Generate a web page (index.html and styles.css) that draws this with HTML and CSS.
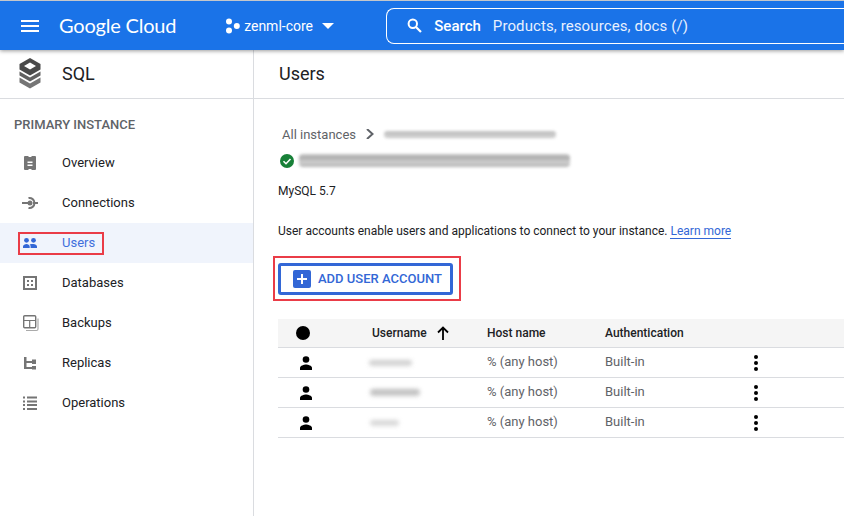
FILE: index.html
```html
<!DOCTYPE html>
<html lang="en">
<head>
  <meta charset="UTF-8">
  <meta name="viewport" content="width=device-width, initial-scale=1.0">
  <title>Users - SQL - Google Cloud</title>
  <link rel="stylesheet" href="styles.css">
</head>
<body>
  <header class="topbar">
    <svg class="menu-icon" width="18" height="12" viewBox="0 0 18 12"><path d="M0 0h18v2H0zM0 5h18v2H0zM0 10h18v2H0z" fill="#fff"/></svg>
    <span class="logo">Google Cloud</span>
    <div class="project">
      <svg width="16" height="16" viewBox="0 0 16 16" fill="#fff"><circle cx="4" cy="3.600" r="3"/><circle cx="4" cy="12.400" r="3"/><circle cx="11.800" cy="8" r="3"/></svg>
      <span>zenml-core</span>
      <svg class="caret" width="12" height="6" viewBox="0 0 12 6"><path d="M0 0h12L6 6z" fill="#fff"/></svg>
    </div>
    <div class="search">
      <svg width="15" height="15" viewBox="0 0 15 15"><circle cx="5.800" cy="5.800" r="4.200" fill="none" stroke="#fff" stroke-width="2"/><path d="M9 9l5 5" stroke="#fff" stroke-width="2.200"/></svg>
      <span class="search-label">Search</span>
      <span class="search-hint">Products, resources, docs (/)</span>
    </div>
  </header>

  <div class="layout">
    <aside class="sidebar">
      <div class="product">
        <svg width="24" height="31" viewBox="0 0 24 31">
          <path d="M12 0l10.500 6v5.500L12 17.500 1.500 11.500V6z" fill="#4a4a4a"/>
          <path d="M12 4.500L18 8l-6 3.500L6 8z" fill="#fff"/>
          <path d="M1.500 13.500l10.500 6 10.500-6v4L12 23.500l-10.500-6z" fill="#616161"/>
          <path d="M1.500 19.500l10.500 6 10.500-6v5L12 30.500l-10.500-6z" fill="#757575"/>
        </svg>
        <span>SQL</span>
      </div>
      <div class="nav-title">PRIMARY INSTANCE</div>
      <nav>
        <a class="nav-item">
          <svg width="20" height="20" viewBox="0 0 20 20"><path d="M5 3h3.500v1h3V3H15a1 1 0 0 1 1 1v12a1 1 0 0 1-1 1h-3.500v-1h-3v1H5a1 1 0 0 1-1-1V4a1 1 0 0 1 1-1z" fill="#757575"/><path d="M7.500 8.500h5V10h-5zM7.500 11.500h5V13h-5z" fill="#fff"/></svg>
          Overview
        </a>
        <a class="nav-item">
          <svg width="20" height="20" viewBox="0 0 20 20" fill="none" stroke="#757575"><path d="M2 10h6M13 10h5" stroke-width="2"/><path d="M8.500 5.100a5 5 0 1 1 0 9.800" stroke-width="2"/><circle cx="10" cy="10" r="2.500" fill="#757575" stroke="none"/></svg>
          Connections
        </a>
        <a class="nav-item active">
          <svg width="20" height="20" viewBox="0 0 20 20" fill="#3367d6"><circle cx="6.500" cy="7.300" r="2.400"/><circle cx="13.500" cy="7.300" r="2.400"/><path d="M3 15v-1.500c0-1.400 2-2.500 3.500-2.500s3.200 1.100 3.200 2.500V15zM10.600 15v-1.500c0-1-.4-1.800-1-2.300.9-.1 2.900-.2 3.900-.2 1.500 0 3.500 1.100 3.500 2.500V15z"/></svg>
          Users
          <span class="mark mark-users"></span>
        </a>
        <a class="nav-item">
          <svg width="20" height="20" viewBox="0 0 20 20"><path d="M4 4h12v12H4z" fill="none" stroke="#757575" stroke-width="2"/><path d="M7 7h2v2H7zM11 7h2v2h-2zM7 11h2v2H7zM11 11h2v2h-2z" fill="#757575"/></svg>
          Databases
        </a>
        <a class="nav-item">
          <svg width="20" height="20" viewBox="0 0 20 20" fill="none" stroke="#757575"><rect x="3.700" y="2.700" width="12" height="12" rx="1" stroke-width="1.400"/><path d="M4 7.500h11.500M9.700 7.500v7" stroke-width="1.200"/><path d="M18 5.500v10.500a1.500 1.500 0 0 1-1.500 1.500H6" stroke="#aaa" stroke-width="1.200"/></svg>
          Backups
        </a>
        <a class="nav-item">
          <svg width="20" height="20" viewBox="0 0 20 20" fill="#757575"><path d="M4 4h2.500v12H4zM6 8h7v2H6zM6 14h7v2H6z"/><path d="M12 6.500h4v4.500h-4zM12 13h4v3.500h-4z"/></svg>
          Replicas
        </a>
        <a class="nav-item">
          <svg width="20" height="20" viewBox="0 0 20 20" fill="#757575"><path d="M3 3.500h2v2H3zM3 7.500h2v2H3zM3 11h2v2H3zM3 15h2v2H3zM7 3.500h10v2H7zM7 7.500h10v2H7zM7 11h10v2H7zM7 15h10v2H7z"/></svg>
          Operations
        </a>
      </nav>
    </aside>

    <main class="content">
      <div class="page-title">Users</div>
      <div class="body">
        <div class="crumbs">
          <span>All instances</span>
          <svg width="8" height="10" viewBox="0 0 8 10"><path d="M1 0l5.500 5L1 10" fill="none" stroke="#5f6368" stroke-width="2"/></svg>
          <span class="smudge smudge-crumb"></span>
        </div>
        <div class="instance">
          <svg width="14" height="14" viewBox="0 0 14 14"><circle cx="7" cy="7" r="7" fill="#188038"/><path d="M3.500 7.200l2.500 2.500 4.500-4.700" fill="none" stroke="#fff" stroke-width="1.600"/></svg>
          <span class="smudge smudge-name"></span>
        </div>
        <div class="version">MySQL 5.7</div>
        <p class="intro">User accounts enable users and applications to connect to your instance. <a class="learn">Learn more</a></p>

        <div class="add-wrap">
          <button class="add-btn">
            <svg width="18" height="18" viewBox="0 0 18 18"><rect width="18" height="18" rx="2" fill="#3367d6"/><path d="M8 4h2v4h4v2h-4v4H8v-4H4V8h4z" fill="#fff"/></svg>
            <span class="add-label">ADD USER ACCOUNT</span>
          </button>
        </div>

        <div class="users-table">
          <div class="row head">
            <span class="cell-icon"><span class="dot"></span></span>
            <span class="cell-name">Username
              <svg width="12" height="14" viewBox="0 0 12 14"><path d="M6 14V2M1 6.500L6 1.500l5 5" fill="none" stroke="#000" stroke-width="1.800"/></svg>
            </span>
            <span class="cell-host">Host name</span>
            <span class="cell-auth">Authentication</span>
          </div>
          <div class="row">
            <span class="cell-icon"><svg width="14" height="14" viewBox="0 0 14 14"><circle cx="7" cy="3.500" r="3.300"/><path d="M1 14v-2c0-2.200 4-3.400 6-3.400s6 1.200 6 3.400v2z"/></svg></span>
            <span class="cell-name"><span class="smudge smudge-user1"></span></span>
            <span class="cell-host">% (any host)</span>
            <span class="cell-auth">Built-in</span>
            <span class="cell-more"><svg width="4" height="16" viewBox="0 0 4 16"><circle cx="2" cy="2" r="2"/><circle cx="2" cy="8" r="2"/><circle cx="2" cy="14" r="2"/></svg></span>
          </div>
          <div class="row">
            <span class="cell-icon"><svg width="14" height="14" viewBox="0 0 14 14"><circle cx="7" cy="3.500" r="3.300"/><path d="M1 14v-2c0-2.200 4-3.400 6-3.400s6 1.200 6 3.400v2z"/></svg></span>
            <span class="cell-name"><span class="smudge smudge-user2"></span></span>
            <span class="cell-host">% (any host)</span>
            <span class="cell-auth">Built-in</span>
            <span class="cell-more"><svg width="4" height="16" viewBox="0 0 4 16"><circle cx="2" cy="2" r="2"/><circle cx="2" cy="8" r="2"/><circle cx="2" cy="14" r="2"/></svg></span>
          </div>
          <div class="row">
            <span class="cell-icon"><svg width="14" height="14" viewBox="0 0 14 14"><circle cx="7" cy="3.500" r="3.300"/><path d="M1 14v-2c0-2.200 4-3.400 6-3.400s6 1.200 6 3.400v2z"/></svg></span>
            <span class="cell-name"><span class="smudge smudge-user3"></span></span>
            <span class="cell-host">% (any host)</span>
            <span class="cell-auth">Built-in</span>
            <span class="cell-more"><svg width="4" height="16" viewBox="0 0 4 16"><circle cx="2" cy="2" r="2"/><circle cx="2" cy="8" r="2"/><circle cx="2" cy="14" r="2"/></svg></span>
          </div>
        </div>
      </div>
    </main>
  </div>
</body>
</html>
```

FILE: styles.css
```css
* {
  box-sizing: border-box;
}
body {
  margin: 0;
  height: 516px;
  overflow: hidden;
  font-family: Roboto, Arial, sans-serif;
  font-size: 13px;
  color: #202124;
  background-color: #fff;
  border-top: 1px solid #c4c7cb;
}
svg {
  flex: none;
  display: block;
}

/* top bar */
.topbar {
  position: relative;
  z-index: 2;
  display: flex;
  align-items: center;
  height: 49px;
  padding-left: 21px;
  background-color: #1a73e8;
  color: #fff;
  box-shadow: 0 1px 4px rgba(0, 0, 0, 0.4);
}
.logo {
  margin-left: 20px;
  width: 167px;
  padding-bottom: 2px;
  font-family: Lato, Arial, sans-serif;
  font-size: 20px;
  letter-spacing: -0.2px;
}
.project {
  display: flex;
  align-items: center;
  gap: 3px;
  width: 162px;
  font-size: 14px;
}
.project .caret {
  margin-left: 6px;
}
.search {
  display: flex;
  align-items: center;
  height: 36px;
  width: 460px;
  padding-left: 20px;
  border: 1px solid #fff;
  border-right: none;
  border-radius: 8px 0 0 8px;
  font-size: 15px;
}
.search-label {
  margin-left: 12px;
  font-weight: 500;
}
.search-hint {
  margin-left: 12px;
  letter-spacing: 0.1px;
  color: #e8f0fe;
}

/* page layout */
.layout {
  display: flex;
  height: 466px;
}
.sidebar {
  width: 254px;
  flex: none;
  border-right: 1px solid #dadce0;
}
.product {
  display: flex;
  align-items: center;
  gap: 20px;
  height: 49px;
  padding-left: 18px;
  padding-bottom: 2px;
  border-bottom: 1px solid #dadce0;
  font-size: 18px;
}
.nav-title {
  height: 44px;
  padding: 18px 0 0 14px;
  font-size: 13px;
  font-weight: 500;
  color: #5f6368;
}
.nav-item {
  position: relative;
  display: flex;
  align-items: center;
  gap: 22px;
  height: 40px;
  padding-left: 20px;
  padding-bottom: 1px;
}
.nav-item.active {
  background-color: #f0f4fc;
  color: #3f6fdc;
}
.mark {
  position: absolute;
  border: 2px solid #ea3c47;
}
.mark-users {
  left: 18px;
  top: 9px;
  width: 86px;
  height: 23px;
}

/* content */
.content {
  flex: 1;
  min-width: 0;
}
.page-title {
  display: flex;
  align-items: center;
  height: 49px;
  padding-left: 25px;
  padding-bottom: 2px;
  border-bottom: 1px solid #dadce0;
  font-size: 18px;
}
.body {
  padding: 26px 0 0 24px;
}
.crumbs {
  display: flex;
  align-items: center;
  height: 18px;
  padding-left: 4px;
  color: #5f6368;
}
.crumbs svg {
  margin: 0 10px;
}
.instance {
  display: flex;
  align-items: center;
  gap: 5px;
  height: 18px;
  margin-top: 9px;
  padding-left: 2px;
}
.smudge {
  display: block;
  background: linear-gradient(to bottom, #bdbdbd, #9e9e9e 30%, #c8c8c8 60%, #a6a6a6);
  filter: blur(1.500px);
  border-radius: 4px;
}
.smudge-crumb {
  width: 172px;
  height: 7px;
  opacity: 0.75;
}
.smudge-name {
  width: 271px;
  height: 13px;
  margin-top: -2px;
  opacity: 0.85;
}
.smudge-user1 {
  width: 43px;
  height: 6px;
  margin-left: -3px;
  opacity: 0.6;
  filter: blur(2px);
}
.smudge-user2 {
  width: 50px;
  height: 7px;
  margin-left: -2px;
  opacity: 0.8;
  filter: blur(2px);
}
.smudge-user3 {
  width: 29px;
  height: 6px;
  margin-left: -2px;
  opacity: 0.5;
  filter: blur(2px);
}
.version {
  margin-top: 12px;
  font-size: 12px;
  line-height: 18px;
}
.intro {
  margin: 22px 0 0;
  font-size: 12px;
  line-height: 18px;
  white-space: nowrap;
}
.learn {
  color: #3367d6;
  border-bottom: 1px solid #3367d6;
}
.add-wrap {
  display: flex;
  width: fit-content;
  margin: 16px 0 0 -5px;
  padding: 5px 6px 4px 3px;
  border: 2px solid #ea3c47;
}
.add-btn {
  display: flex;
  align-items: center;
  gap: 7px;
  width: 175px;
  height: 32px;
  padding: 0 0 0 12px;
  background: #fff;
  border: 3px solid #3367d6;
  border-radius: 3px;
  color: #3367d6;
  font-family: Roboto, Arial, sans-serif;
  font-size: 13px;
  font-weight: 500;
}
.add-label {
  margin-bottom: 2px;
}

/* users table */
.users-table {
  margin-top: 18px;
}
.row {
  display: grid;
  grid-template-columns: 94px 115px 118px 140px 1fr;
  align-items: center;
  height: 30px;
  border-bottom: 1px solid #dadce0;
  font-size: 13px;
  color: #5f6368;
}
.row .cell-host, .row .cell-auth {
  padding-bottom: 2px;
}
.row.head {
  height: 29px;
  background-color: #f5f5f5;
  color: #202124;
  font-size: 12px;
  font-weight: 500;
}
.row.head .cell-host, .row.head .cell-auth {
  padding-bottom: 0;
}
.cell-icon {
  display: flex;
  padding-left: 21px;
}
.dot {
  width: 14px;
  height: 14px;
  border-radius: 50%;
  background-color: #000;
  margin-left: -3px;
}
.cell-name {
  display: flex;
  align-items: center;
  gap: 10px;
}
.cell-more {
  display: flex;
  padding-left: 9px;
}
```
